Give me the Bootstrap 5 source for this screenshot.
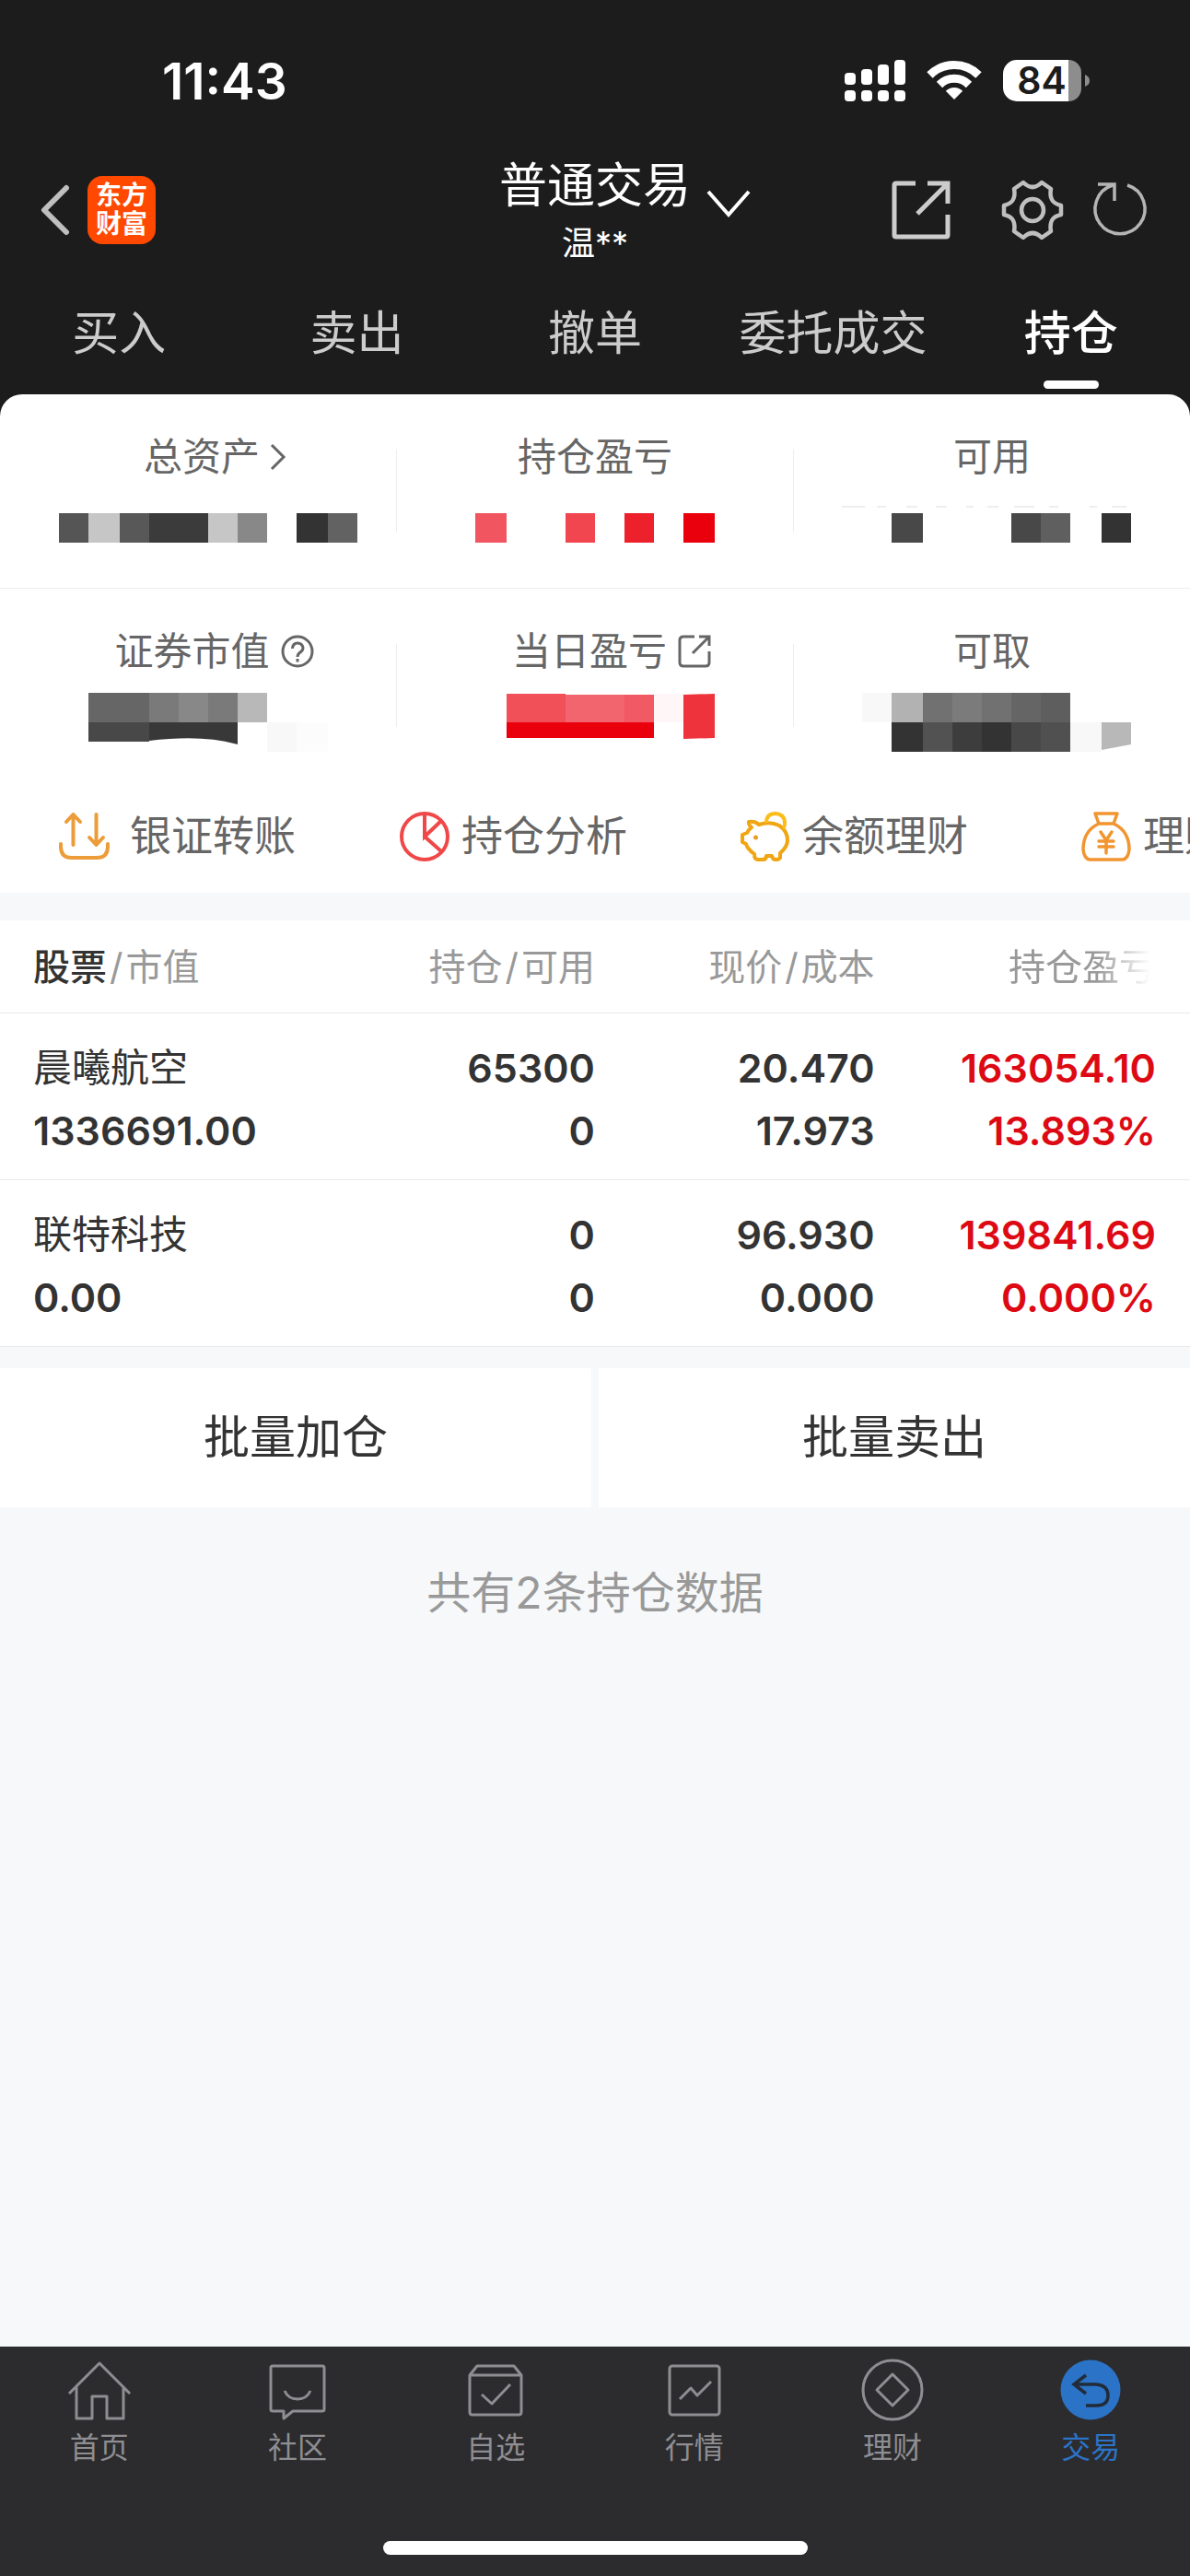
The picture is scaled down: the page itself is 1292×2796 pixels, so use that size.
<!DOCTYPE html>
<html lang="zh-CN">
<head>
<meta charset="utf-8">
<meta name="viewport" content="width=device-width, initial-scale=1">
<title>普通交易 - 持仓</title>
<link href="https://cdn.jsdelivr.net/npm/bootstrap@5.3.0/dist/css/bootstrap.min.css" rel="stylesheet">
<style>
  body { font-family: "Inter", "Noto Sans CJK SC", sans-serif; background: #f6f8fa; color: #333; }
  svg { display: block; flex: none; overflow: visible; }
  button, a { color: inherit; text-decoration: none; }
  .plain { border: 0; background: none; padding: 0; }
  .top-area { background: #1c1c1c; color: #fff; }
  .status { padding: 56px 108px 52px 176px; }
  .clock { font-size: 55px; line-height: 64px; font-weight: 600; }
  .battery-level { font: 600 41px "Inter", sans-serif; }
  .title-bar { display: grid; grid-template-columns: 1fr auto 1fr; height: 112px; padding: 0 44px; }
  .account { display: grid; grid-template-columns: 46px auto 46px; column-gap: 18px; }
  .account-type { font-size: 52px; line-height: 60px; }
  .account-user { font-size: 36px; line-height: 40px; margin-top: 12px; }
  .app-tile { width: 74px; height: 74px; margin-left: 20px; border-radius: 16px; background: #ff4800; color: #fff; font-size: 28px; line-height: 31px; font-weight: 700; }
  .trade-tabs { padding: 48px 0 6px; }
  .trade-tabs a { flex: 1 1 0; font-size: 51px; line-height: 60px; color: #ccc; display: flex; flex-direction: column; align-items: center; gap: 21px; white-space: nowrap; }
  .trade-tabs a::after { content: ""; width: 60px; height: 9px; border-radius: 5px; }
  .trade-tabs a.active { color: #fff; font-weight: 500; }
  .trade-tabs a.active::after { background: #fff; }
  .assets { background: #fff; border-radius: 24px 24px 0 0; }
  .asset-row { padding: 40px 0; }
  .asset-row + .asset-row { border-top: 1px solid #ececec; padding-bottom: 0; }
  .asset { flex: 1 1 0; }
  .asset-name { font-size: 42px; line-height: 56px; color: #666; gap: 12px; }
  .asset-name.with-icon { padding-left: 36px; }
  .divide { width: 1px; height: 90px; margin-top: 20px; background: #eee; }
  .shortcuts { background: #fff; padding: 61px 0 33px 64px; overflow: hidden; }
  .shortcuts a { flex: 0 0 370px; display: flex; align-items: center; gap: 13px; font-size: 45px; line-height: 56px; color: #666; white-space: nowrap; }
  .shortcuts a:first-child { gap: 22px; }
  .holdings { margin-top: 30px; table-layout: fixed; width: 100%; background: #fff; }
  .holdings th { font-size: 40px; line-height: 56px; font-weight: 400; color: #999; padding: 23px 0 21px; text-align: right; white-space: nowrap; }
  .holdings td { font-size: 43px; line-height: 68px; font-weight: 600; padding: 24px 0 19px; text-align: right; }
  .holdings tr { border-bottom: 1px solid #e8e9eb; }
  .holdings tr > :first-child { text-align: left; padding-left: 36px; }
  .holdings tr > :last-child { padding-right: 37px; }
  .holdings .sort-by { color: #333; font-weight: 500; }
  .holdings i { font-style: normal; margin: 0 3px; }
  .stock { font-size: 42px; font-weight: 400; }
  .gain { color: #dd0a14; }
  .fade-out { -webkit-mask-image: linear-gradient(to right, #000 60%, transparent 96%); mask-image: linear-gradient(to right, #000 60%, transparent 96%); }
  .batch { gap: 8px; margin-top: 23px; }
  .batch button { flex: 1 1 0; height: 151px; background: #fff; font-size: 50px; }
  .total { margin-top: 63px; font-size: 48px; line-height: 60px; color: #999; }
  .tabbar { background: #2c2c2e; color: #8e8e92; padding: 13px 0 23px; }
  .tabbar a { flex: 1 1 0; display: flex; flex-direction: column; align-items: center; gap: 9px; font-size: 32px; line-height: 40px; }
  .tabbar a.active { color: #2b73c7; }
  .home-indicator { width: 461px; height: 15px; border-radius: 8px; background: #fff; margin: 81px auto 0; }
</style>
</head>
<body class="d-flex flex-column min-vh-100">

<div class="top-area">
  <div class="status d-flex justify-content-between align-items-center">
    <span class="clock">11:43</span>
    <div class="d-flex align-items-center">
      <svg width="66" height="46" viewBox="0 0 66 46" fill="#fff"><rect y="14" width="12" height="13" rx="4"/><rect x="18" y="10" width="12" height="17" rx="4"/><rect x="36" y="5" width="12" height="22" rx="4"/><rect x="54" width="12" height="27" rx="4"/><rect y="33" width="12" height="12" rx="4"/><rect x="18" y="33" width="12" height="12" rx="4"/><rect x="36" y="33" width="12" height="12" rx="4"/><rect x="54" y="33" width="12" height="12" rx="4"/></svg>
      <svg class="ms-4" width="58" height="44" viewBox="0 0 58 44" fill="none" stroke="#fff" stroke-width="9"><path d="M2.500 15.500A37.500 37.500 0 0 1 55.500 15.500M13 26A22.500 22.500 0 0 1 45 26"/><path d="M29 42L19.800 32.800A13 13 0 0 1 38.200 32.800Z" fill="#fff" stroke="none"/></svg>
      <svg class="ms-4" width="95" height="46" viewBox="0 0 95 46"><path d="M15 0H71V45H15A15 15 0 0 1 0 30V15A15 15 0 0 1 15 0Z" fill="#fff"/><path d="M71 0A14 14 0 0 1 85 14V31A14 14 0 0 1 71 45ZM89 16Q94 18 94 22.500T89 29Z" fill="#8d8d8d"/><text class="battery-level" x="42" y="37" text-anchor="middle" fill="#1c1c1c">84</text></svg>
    </div>
  </div>

  <header class="title-bar align-items-center">
    <div class="d-flex align-items-center">
      <button class="plain" aria-label="返回"><svg width="31" height="54" viewBox="0 0 31 54" fill="none" stroke="#bfbfbf" stroke-width="6" stroke-linecap="round" stroke-linejoin="round"><path d="M28 3L4 27L28 51"/></svg></button>
      <a href="#" class="app-tile text-center d-flex flex-column justify-content-center"><span>东方</span><span>财富</span></a>
    </div>
    <button class="plain account">
      <span></span>
      <span class="d-flex flex-column align-items-center text-nowrap"><span class="account-type">普通交易</span><span class="account-user">温**</span></span>
      <svg class="align-self-center" width="46" height="48" viewBox="0 0 46 48" fill="none" stroke="#fff" stroke-width="4"><path d="M1 4L23 29L45 4"/></svg>
    </button>
    <div class="d-flex align-items-center justify-content-end">
      <button class="plain" aria-label="分享"><svg width="64" height="64" viewBox="0 0 64 64" fill="none" stroke="#ccc" stroke-width="5"><path d="M26 3H5Q3 3 3 5V59Q3 61 5 61H59Q61 61 61 59V37M39 3H61V25M61 3L28 36"/></svg></button>
      <button class="plain" aria-label="设置"><svg class="ms-5" width="74" height="66" viewBox="-41 -33 74 66" fill="none" stroke="#bfbfbf" stroke-width="4.500" stroke-linejoin="round"><path d="M-10 -30Q0 -20 10 -30L20 -23C18 -12 22 -7 31 -5V5C22 7 18 12 20 23L10 30Q0 20 -10 30L-20 23C-18 12 -22 7 -31 5V-5C-22 -7 -18 -12 -20 -23Z"/><circle r="12"/></svg></button>
      <button class="plain" aria-label="刷新"><svg class="ms-4" width="70" height="62" viewBox="-10 1 70 62" fill="none" stroke="#b4b4b4" stroke-width="3.500"><path d="M36 5A27 27 0 1 1 20 5M4 4H22V22"/></svg></button>
    </div>
  </header>

  <nav class="trade-tabs d-flex">
    <a href="#">买入</a><a href="#">卖出</a><a href="#">撤单</a><a href="#">委托成交</a><a href="#" class="active" aria-current="page">持仓</a>
  </nav>

  <section class="assets">
    <div class="asset-row d-flex">
      <div class="asset">
        <div class="asset-name with-icon d-flex justify-content-center align-items-center">总资产<svg width="16" height="30" viewBox="0 0 16 30" fill="none" stroke="#666" stroke-width="3"><path d="M1 2L14 15L1 28"/></svg></div>
        <svg class="mx-auto mt-4" width="400" height="50" viewBox="0 0 400 50" shape-rendering="crispEdges"><path fill="#555" d="M49 9h32v32H49z"/><path fill="#c6c6c6" d="M81 9h34v32H81zM211 9h32v32h-32z"/><path fill="#585858" d="M115 9h32v32h-32z"/><path fill="#3b3b3b" d="M147 9h64v32h-64z"/><path fill="#888" d="M243 9h32v32h-32z"/><path fill="#333" d="M307 9h34v32h-34z"/><path fill="#626262" d="M341 9h32v32h-32z"/></svg>
      </div>
      <div class="divide"></div>
      <div class="asset">
        <div class="asset-name d-flex justify-content-center">持仓盈亏</div>
        <svg class="mx-auto mt-4" width="400" height="50" viewBox="0 0 400 50" shape-rendering="crispEdges"><path fill="#f15560" d="M70 9h34v32H70z"/><path fill="#f1454f" d="M168 9h32v32h-32z"/><path fill="#ed212c" d="M232 9h32v32h-32z"/><path fill="#ea000c" d="M296 9h34v32h-34z"/></svg>
      </div>
      <div class="divide"></div>
      <div class="asset">
        <div class="asset-name d-flex justify-content-center">可用</div>
        <svg class="mx-auto mt-4" width="400" height="50" viewBox="0 0 400 50" shape-rendering="crispEdges"><path fill="#484848" d="M91 9h34v32H91zM221 9h32v32h-32z"/><path fill="#5f5f5f" d="M253 9h32v32h-32z"/><path fill="#333" d="M319 9h32v32h-32z"/><path fill="#eee" d="M37 1h25v2H37zM75 1h10v2H75zM107 1h12v2h-12zM139 1h12v2h-12zM172 1h8v2h-8zM195 1h12v2h-12zM224 1h22v2h-22zM262 1h10v2h-10zM306 1h8v2h-8zM330 1h16v2h-16z"/></svg>
      </div>
    </div>
    <div class="asset-row d-flex">
      <div class="asset">
        <div class="asset-name with-icon d-flex justify-content-center align-items-center">证券市值<svg width="37" height="37" viewBox="0 0 37 37" fill="none" stroke="#666" stroke-width="3"><circle cx="18" cy="18" r="16"/><path d="M12.500 15Q13 9 18 9T24 14Q24 17 21 19T18 24"/><path d="M18 26V29.500"/></svg></div>
        <svg class="mx-auto mt-2" width="400" height="76" viewBox="0 0 400 76"><path fill="#666" d="M81 9H147V41H81z"/><path fill="#7a7a7a" d="M147 9h32v32h-32zM211 9h32v32h-32z"/><path fill="#888" d="M179 9h32v32h-32z"/><path fill="#b8b8b8" d="M243 9h32v32h-32z"/><path fill="#484848" d="M81 41h66v21H81z"/><path fill="#383838" d="M147 41h96v24Q205 54 147 61z"/><path fill="#f8f8f8" d="M275 41h32v32h-32z"/><path fill="#fcfcfc" d="M307 41h34v32h-34z"/></svg>
      </div>
      <div class="divide"></div>
      <div class="asset">
        <div class="asset-name with-icon d-flex justify-content-center align-items-center">当日盈亏<svg width="36" height="36" viewBox="0 0 36 36" fill="none" stroke="#666" stroke-width="3"><path d="M18 2H6Q2 2 2 6V30Q2 34 6 34H30Q34 34 34 30V18M23 2H34V12M34 2L16 20"/></svg></div>
        <svg class="mx-auto mt-2" width="400" height="76" viewBox="0 0 400 76"><path fill="#f15058" d="M104 10h64v31h-64z"/><path fill="#f3656e" d="M168 11h64v30h-64z"/><path fill="#f15a64" d="M232 11h32v30h-32z"/><path fill="#ea000c" d="M104 41h160v17H104z"/><path fill="#fff7f7" d="M264 10h32v31h-32z"/><path fill="#ef333d" d="M296 11l34-1v48l-34 1z"/></svg>
      </div>
      <div class="divide"></div>
      <div class="asset">
        <div class="asset-name d-flex justify-content-center">可取</div>
        <svg class="mx-auto mt-2" width="400" height="76" viewBox="0 0 400 76"><path fill="#f8f8f8" d="M59 9h32v32H59zM285 41h34v32h-34z"/><path fill="#b2b2b2" d="M91 9h34v32H91z"/><path fill="#717171" d="M125 9h96v32h-96z"/><path fill="#7b7b7b" d="M157 9h32v32h-32z"/><path fill="#656565" d="M221 9h32v32h-32z"/><path fill="#5e5e5e" d="M253 9h32v32h-32z"/><path fill="#333" d="M91 41h34v32H91zM189 41h32v32h-32z"/><path fill="#525252" d="M125 41h32v32h-32z"/><path fill="#3d3d3d" d="M157 41h32v32h-32z"/><path fill="#484848" d="M221 41h32v32h-32z"/><path fill="#505050" d="M253 41h32v32h-32z"/><path fill="#b8b8b8" d="M319 41h32v24l-32 6z"/></svg>
      </div>
    </div>
  </section>
</div>

<nav class="shortcuts d-flex">
  <a href="#"><svg width="55" height="54" viewBox="0 0 55 54" fill="none" stroke="#ec9c38" stroke-width="4" stroke-linecap="round" stroke-linejoin="round"><path d="M2 35V38Q2 50 14 50H41Q53 50 53 38V35M15.500 36V3M8 11L15.500 3L23 11M40.500 3V36M33 28L40.500 36L48 28"/></svg>银证转账</a>
  <a href="#"><svg width="54" height="54" viewBox="0 0 54 54" fill="none" stroke="#f04848" stroke-width="4"><circle cx="27" cy="27" r="25"/><path d="M27 2V27L45 10M27 27L45 43"/></svg>持仓分析</a>
  <a href="#"><svg width="54" height="54" viewBox="0 0 54 54" fill="none" stroke="#f0a512" stroke-width="4" stroke-linejoin="round"><path d="M9 11Q16 10 20 14Q32 10 42 15Q51 21 51 31Q51 38 43 45V50Q42 52 38 52Q35 52 34 48H28Q28 52 24 52H19Q15 52 15 46Q7 40 6 35L2 33V25L7 23Q9 19 12 17Q8 14 9 11Z"/><path d="M28 12Q28 2 38 2Q48 3 48 12Q48 17 46 18" stroke="#fabd19"/><circle cx="16.500" cy="28" r="2.500" fill="#ec9c24" stroke="none"/></svg>余额理财</a>
  <a href="#"><svg width="54" height="54" viewBox="0 0 54 54" fill="none" stroke="#f29530" stroke-width="3.500" stroke-linejoin="round" stroke-linecap="round"><path d="M15 2H39L35 13H19ZM19 13Q2 21 2 41Q3 51 9 52H45Q51 51 52 41Q52 21 35 13"/><path d="M21 22L27 31L33 22M27 31V45M19 32H35M19 38H35"/></svg>理财</a>
</nav>

<main>
  <table class="holdings">
    <colgroup><col style="width:26%"><col style="width:24%"><col style="width:23.500%"><col></colgroup>
    <thead>
      <tr><th scope="col"><span class="sort-by">股票</span><i>/</i>市值</th><th scope="col">持仓<i>/</i>可用</th><th scope="col">现价<i>/</i>成本</th><th scope="col"><span class="fade-out">持仓盈亏</span></th></tr>
    </thead>
    <tbody>
      <tr><td><span class="stock">晨曦航空</span><br>1336691.00</td><td>65300<br>0</td><td>20.470<br>17.973</td><td class="gain">163054.10<br>13.893%</td></tr>
      <tr><td><span class="stock">联特科技</span><br>0.00</td><td>0<br>0</td><td>96.930<br>0.000</td><td class="gain">139841.69<br>0.000%</td></tr>
    </tbody>
  </table>
  <div class="batch d-flex">
    <button class="plain">批量加仓</button><button class="plain">批量卖出</button>
  </div>
  <p class="total text-center">共有2条持仓数据</p>
</main>

<footer class="tabbar mt-auto">
  <nav class="d-flex">
    <a href="#"><svg width="68" height="68" viewBox="0 0 68 68" fill="none" stroke="currentColor" stroke-width="3" stroke-linejoin="round"><path d="M1 38L34 5L67 38M9 30V65H26V41H42V65H60V30"/></svg>首页</a>
    <a href="#"><svg width="68" height="68" viewBox="0 0 68 68" fill="none" stroke="currentColor" stroke-width="3" stroke-linejoin="round"><path d="M7 8H61Q63 8 63 10V55Q63 57 61 57H29L19 65V57H7Q5 57 5 55V10Q5 8 7 8ZM20 35Q24 44 34 44T48 35"/></svg>社区</a>
    <a href="#"><svg width="68" height="68" viewBox="0 0 68 68" fill="none" stroke="currentColor" stroke-width="3" stroke-linejoin="round"><path d="M6 18L14 8H54L62 18V58Q62 61 59 61H9Q6 61 6 58ZM6 18H62M19 39L30 49L50 28"/></svg>自选</a>
    <a href="#"><svg width="68" height="68" viewBox="0 0 68 68" fill="none" stroke="currentColor" stroke-width="3" stroke-linejoin="round"><rect x="7" y="8" width="54" height="53" rx="3"/><path d="M18 44L30 32L37 40L52 25"/></svg>行情</a>
    <a href="#"><svg width="68" height="68" viewBox="0 0 68 68" fill="none" stroke="currentColor" stroke-width="3" stroke-linejoin="round"><circle cx="34" cy="34" r="32"/><path d="M34 17L51 34L34 51L17 34Z"/></svg>理财</a>
    <a href="#" class="active" aria-current="page"><svg width="68" height="68" viewBox="0 0 68 68" fill="none" stroke="#222c38" stroke-width="3.500"><circle cx="34" cy="34" r="32.500" fill="currentColor" stroke="none"/><path d="M29 18L16 28L29 38M16 28H40Q53 29 53 40T40 51H29"/></svg>交易</a>
  </nav>
  <div class="home-indicator"></div>
</footer>

<script src="https://cdn.jsdelivr.net/npm/bootstrap@5.3.0/dist/js/bootstrap.bundle.min.js"></script>
</body>
</html>
